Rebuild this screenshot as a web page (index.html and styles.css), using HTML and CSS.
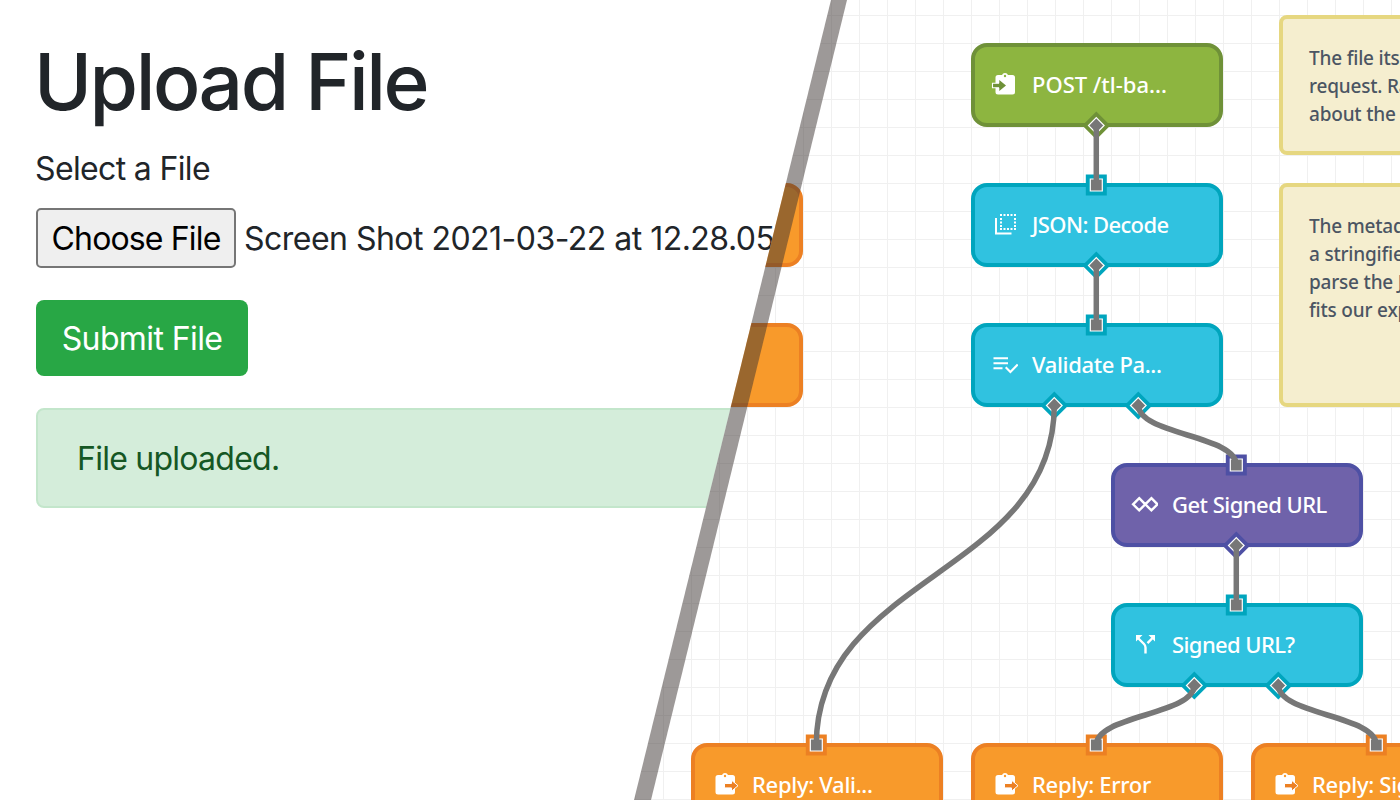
FILE: index.html
```
<!DOCTYPE html>
<html lang="en">
<head>
<meta charset="utf-8">
<title>Upload File</title>
<link rel="stylesheet" href="styles.css">
</head>
<body>
<main class="stage">
  <svg class="symbols" width="0" height="0" aria-hidden="true">
    <symbol id="in" viewBox="0 0 28 28"><path d="M8 5h4a3.200 3.200 0 0 1 6 0h4.500q2.500 0 2.500 2.500v14.500q0 2.500-2.500 2.500H8q-2.500 0-2.500-2.500V7.500Q5.500 5 8 5z" fill="#fff"/><circle cx="15" cy="6" r="1.200" fill="#8db540"/><path d="M2.500 13.300h6.800V10l6.700 5.500-6.700 5.500v-3.300H2.500z" fill="#6f9138"/><path d="M9 13.300H2.500v4.400H9" fill="none" stroke="#fff" stroke-width="1.100"/></symbol>
    <symbol id="out" viewBox="0 0 28 28"><path d="M8 5h4a3.200 3.200 0 0 1 6 0h4.500q2.500 0 2.500 2.500v14.500q0 2.500-2.500 2.500H8q-2.500 0-2.500-2.500V7.500Q5.500 5 8 5z" fill="#fff"/><circle cx="15" cy="6" r="1.200" fill="#f89a2b"/><path d="M14.500 13.500h7v-3.300l6.500 5.500-6.500 5.500v-3.300h-7z" fill="#ec8023" stroke="#fff" stroke-width="1"/></symbol>
    <symbol id="json" viewBox="0 0 28 28"><path d="M6 8v15.500h15.500" fill="none" stroke="#fff" stroke-width="2"/><path d="M10 5h16M10 19h16M11 8v10M25 8v10" fill="none" stroke="#fff" stroke-width="2" stroke-dasharray="2 1.500"/></symbol>
    <symbol id="check" viewBox="0 0 28 28"><path d="M3.500 8.300h14.500M3.500 13.300h14.500M3.500 18.300h9M15.700 17.300l4.700 4.700 7.300-7.500" fill="none" stroke="#fff" stroke-width="2.100"/></symbol>
    <symbol id="loop" viewBox="0 0 28 28"><path d="M9.200 8.200l6.100 6.100-6.100 6.100-6.100-6.100zM21.400 8.200l6.100 6.100-6.100 6.100-6.100-6.100z" fill="none" stroke="#fff" stroke-width="2.400"/></symbol>
    <symbol id="split" viewBox="0 0 28 28"><path d="M15.500 23.500v-6q0-2-1.500-3.500L8 8m9.500 5.200l5-5.200" fill="none" stroke="#fff" stroke-width="2.400"/><path d="M6 5h6.500L6 11.500zM18.500 5H25v6.500z" fill="#fff"/></symbol>
  </svg>

  <section class="canvas">
    <div class="node reply cut-a"></div>
    <div class="node reply cut-b"></div>
    <div class="node post n-post"><svg class="icon"><use href="#in"/></svg><span class="label l-post">POST /tl-ba...</span></div>
    <div class="node cyan n-json"><svg class="icon"><use href="#json"/></svg><span class="label l-json">JSON: Decode</span></div>
    <div class="node cyan n-valid"><svg class="icon"><use href="#check"/></svg><span class="label l-valid">Validate Pa...</span></div>
    <div class="node purple n-get"><svg class="icon"><use href="#loop"/></svg><span class="label l-get">Get Signed URL</span></div>
    <div class="node cyan n-signed"><svg class="icon"><use href="#split"/></svg><span class="label l-signed">Signed URL?</span></div>
    <div class="node reply n-vali"><svg class="icon"><use href="#out"/></svg><span class="label l-reply">Reply: Vali...</span></div>
    <div class="node reply n-error"><svg class="icon"><use href="#out"/></svg><span class="label l-reply">Reply: Error</span></div>
    <div class="node reply n-sign"><svg class="icon"><use href="#out"/></svg><span class="label l-reply">Reply: Sig</span></div>
    <div class="note note-a">The file its<br>request. Ra<br>about the</div>
    <div class="note note-b">The metad<br>a stringifie<br>parse the J<br>fits our exp</div>

    <svg class="wires" viewBox="0 0 1400 800">
      <defs>
        <g id="dia"><path d="M0-14L14 0 0 14-14 0z"/><path d="M0-7.800L7.800 0 0 7.800-7.800 0z" fill="#777" stroke="#fff" stroke-width="1.200"/></g>
        <g id="sq"><path d="M-10.500-10.500h21v21h-21z"/><path d="M-6-6H6V6H-6z" fill="#777" stroke="#fff" stroke-width="1.200"/></g>
      </defs>
      <g fill="#6f9138"><use href="#dia" x="1096.300" y="125.500"/></g>
      <g fill="#00a5bd">
        <use href="#sq" x="1096.300" y="185"/><use href="#dia" x="1096.300" y="265.500"/>
        <use href="#sq" x="1096.300" y="325"/><use href="#dia" x="1054.300" y="405.500"/><use href="#dia" x="1138.300" y="405.500"/>
        <use href="#sq" x="1236.300" y="605"/><use href="#dia" x="1194.300" y="685.500"/><use href="#dia" x="1278.300" y="685.500"/>
      </g>
      <g fill="#4e50a4"><use href="#sq" x="1236.300" y="465"/><use href="#dia" x="1236.300" y="545.500"/></g>
      <g fill="#ec8023"><use href="#sq" x="816.300" y="745"/><use href="#sq" x="1096.300" y="745"/><use href="#sq" x="1376.300" y="745"/></g>
      <g fill="none" stroke="#777" stroke-width="5.500">
        <path d="M1096.300 125v60M1096.300 265v60M1236.300 545v60"/>
        <path d="M1054.300 405C1054.300 575 816.300 575 816.300 745"/>
        <path d="M1138.300 405C1138.300 435 1236.300 435 1236.300 465"/>
        <path d="M1194.300 685C1194.300 715 1096.300 715 1096.300 745"/>
        <path d="M1278.300 685C1278.300 715 1376.300 715 1376.300 745"/>
      </g>
    </svg>
  </section>

  <section class="page">
    <h1 class="title">Upload File</h1>
    <label class="caption">Select a File</label>
    <div class="picker"><span class="choose">Choose File</span><span class="filename">Screen Shot 2021-03-22 at 12.28.05</span></div>
    <div class="submit">Submit File</div>
    <div class="alert">File uploaded.</div>
  </section>
  <div class="divider"></div>
</main>
</body>
</html>
```
FILE: styles.css
```
* { box-sizing: border-box; }
body { margin: 0; }
.symbols { position: absolute; }
.stage { position: relative; width: 1400px; height: 800px; overflow: hidden; background: #fff; }

/* Workflow canvas */
.canvas {
  position: absolute; inset: 0;
  background-image: linear-gradient(to right, #f0f0f0 1px, transparent 1px), linear-gradient(to bottom, #f0f0f0 1px, transparent 1px);
  background-size: 28px 28px;
  background-position: 19px 15px;
  font-family: "Noto Sans", "Open Sans", sans-serif;
}
.node {
  position: absolute; width: 252px; height: 84px;
  display: flex; align-items: center; gap: 14px; padding: 0 0 2px 15px;
  border: 4px solid; border-radius: 16px; color: #fff;
}
.post { background: #8db540; border-color: #6f9138; }
.cyan { background: #30c2e0; border-color: #00a5bd; }
.purple { background: #6f62aa; border-color: #4e50a4; }
.reply { background: #f89a2b; border-color: #ec8023; }
.cut-a { left: 551px; top: 183px; }
.cut-b { left: 551px; top: 323px; }
.n-post { left: 971px; top: 43px; }
.n-json { left: 971px; top: 183px; }
.n-valid { left: 971px; top: 323px; }
.n-get { left: 1111px; top: 463px; }
.n-signed { left: 1111px; top: 603px; }
.n-vali { left: 691px; top: 743px; }
.n-error { left: 971px; top: 743px; }
.n-sign { left: 1251px; top: 743px; }
.icon { width: 28px; height: 28px; flex: none; overflow: visible; }
.label { font-size: 22px; font-weight: 500; line-height: 30px; white-space: nowrap; letter-spacing: -0.6px; }
.l-post { letter-spacing: 0; }
.l-valid { letter-spacing: -0.35px; }
.l-get { letter-spacing: -0.52px; }
.l-reply { letter-spacing: -0.3px; }
.note {
  position: absolute; width: 280px; padding: 25px 26px;
  background: #f5eecf; border: 4px solid #e6d780; border-radius: 8px;
  color: #4b5563; font-size: 19px; font-weight: 500; line-height: 28px; letter-spacing: -0.2px; white-space: nowrap;
}
.note-a { left: 1279px; top: 15px; height: 140px; }
.note-b { left: 1279px; top: 183px; height: 224px; }
.wires { position: absolute; inset: 0; width: 1400px; height: 800px; }

/* Upload form, cut along the slanted divider */
.page {
  position: absolute; inset: 0; padding: 34px 36px; background: #fff;
  clip-path: polygon(0 0, 831px 0, 634px 800px, 0 800px);
  font-family: Inter, "Liberation Sans", sans-serif; font-size: 32px; line-height: 48px; color: #212529;
}
.title { margin: 0 0 15px -2px; font-size: 78.5px; font-weight: 550; line-height: 96px; letter-spacing: -2.5px; }
.caption { display: block; margin: 0 0 15px -1px; letter-spacing: -0.65px; }
.picker { display: flex; align-items: center; gap: 8px; height: 60px; margin-bottom: 32px; white-space: nowrap; }
.choose {
  display: flex; align-items: center; justify-content: center; width: 200px; height: 60px; padding-top: 2px;
  background: #efefef; border: 2px solid #767676; border-radius: 5px; color: #000; letter-spacing: -0.85px;
}
.filename { padding-top: 2px; letter-spacing: -0.52px; }
.submit {
  display: flex; align-items: center; justify-content: center; width: 212px; height: 76px; margin-bottom: 32px; padding-top: 2px;
  background: #28a745; border-radius: 8px; color: #fff; letter-spacing: -0.6px;
}
.alert {
  height: 100px; padding: 25px 39px; background: #d4edda; border: 2px solid #c3e6cb; border-radius: 8px;
  color: #155724; letter-spacing: -0.75px;
}
.divider {
  position: absolute; inset: 0; background: rgba(60, 52, 50, 0.5);
  clip-path: polygon(831px 0, 847px 0, 651px 800px, 634px 800px);
}
```
